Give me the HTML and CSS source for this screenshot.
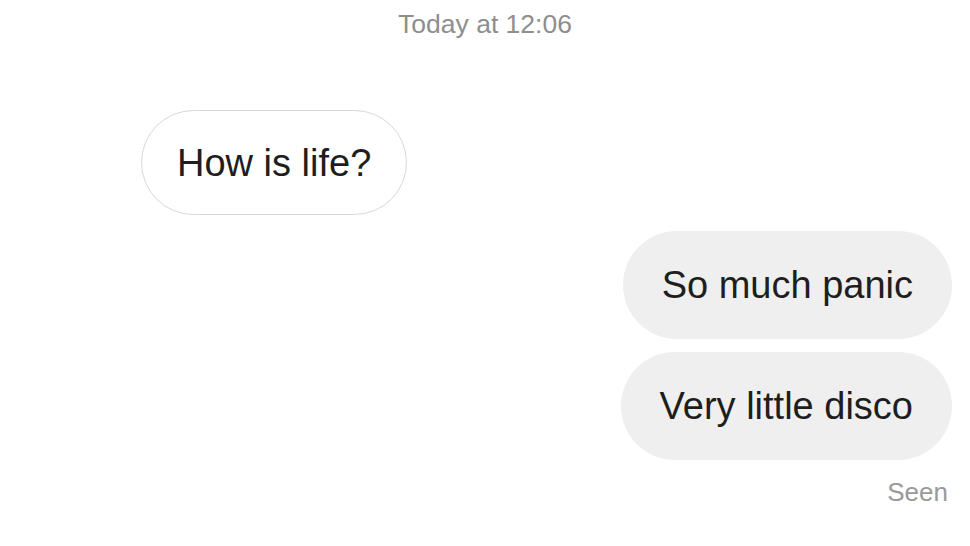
FILE: index.html
```html
<!DOCTYPE html>
<html>
<head>
<meta charset="utf-8">
<link rel="stylesheet" href="styles.css">
</head>
<body>
<div class="chat">
  <div class="timestamp">Today at 12:06</div>
  <div class="row row-in">
    <div class="bubble bubble-in">How is life?</div>
  </div>
  <div class="row row-out first-out">
    <div class="bubble bubble-out">So much panic</div>
  </div>
  <div class="row row-out">
    <div class="bubble bubble-out">Very little disco</div>
  </div>
  <div class="seen">Seen</div>
</div>
</body>
</html>
```
FILE: styles.css
```css
html, body {
  margin: 0;
  padding: 0;
  background: #ffffff;
}
body {
  font-family: "Liberation Sans", Arial, sans-serif;
  width: 970px;
  height: 546px;
  overflow: hidden;
}
.chat {
  display: flex;
  flex-direction: column;
  padding: 9px 18px 0 141px;
}
.timestamp {
  font-size: 26.5px;
  line-height: 30px;
  color: #8e8e8e;
  text-align: center;
  margin-left: -141px;
  margin-right: -18px;
}
.row {
  display: flex;
}
.row-in {
  justify-content: flex-start;
  margin-top: 71px;
}
.row-out {
  justify-content: flex-end;
  margin-top: 13px;
}
.first-out {
  margin-top: 16px;
}
.bubble {
  font-size: 38px;
  line-height: 44px;
  color: #1e1e1e;
  border-radius: 999px;
  white-space: nowrap;
}
.bubble-in {
  border: 1.5px solid #d8d8d8;
  padding: 29.5px 35px;
}
.bubble-out {
  background: #efefef;
  padding: 32px 39px;
}
.seen {
  align-self: flex-end;
  margin-top: 17px;
  margin-right: 4px;
  font-size: 26px;
  line-height: 30px;
  color: #999999;
}
```
